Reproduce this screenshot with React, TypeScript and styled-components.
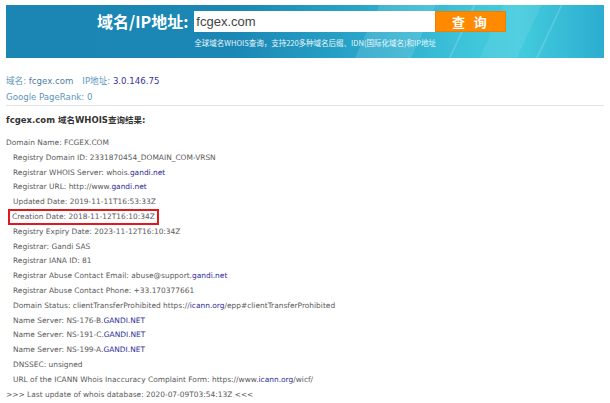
import { createGlobalStyle, styled } from "styled-components";

const GlobalStyle = createGlobalStyle`
  html, body {
    margin: 0;
    padding: 0;
    background: #ffffff;
  }
  body {
    font-family: "DejaVu Sans", Verdana, sans-serif;
  }
`;

const records: { text: string; link?: string; after?: string; indent?: boolean; mark?: boolean }[] = [
  { text: "Domain Name: FCGEX.COM" },
  { text: "Registry Domain ID: 2331870454_DOMAIN_COM-VRSN", indent: true },
  { text: "Registrar WHOIS Server: whois.", link: "gandi.net", indent: true },
  { text: "Registrar URL: http://www.", link: "gandi.net", indent: true },
  { text: "Updated Date: 2019-11-11T16:53:33Z", indent: true },
  { text: "Creation Date: 2018-11-12T16:10:34Z", indent: true, mark: true },
  { text: "Registry Expiry Date: 2023-11-12T16:10:34Z", indent: true },
  { text: "Registrar: Gandi SAS", indent: true },
  { text: "Registrar IANA ID: 81", indent: true },
  { text: "Registrar Abuse Contact Email: abuse@support.", link: "gandi.net", indent: true },
  { text: "Registrar Abuse Contact Phone: +33.170377661", indent: true },
  {
    text: "Domain Status: clientTransferProhibited https://",
    link: "icann.org",
    after: "/epp#clientTransferProhibited",
    indent: true,
  },
  { text: "Name Server: NS-176-B.", link: "GANDI.NET", indent: true },
  { text: "Name Server: NS-191-C.", link: "GANDI.NET", indent: true },
  { text: "Name Server: NS-199-A.", link: "GANDI.NET", indent: true },
  { text: "DNSSEC: unsigned", indent: true },
  {
    text: "URL of the ICANN Whois Inaccuracy Complaint Form: https://www.",
    link: "icann.org",
    after: "/wicf/",
    indent: true,
  },
  { text: ">>> Last update of whois database: 2020-07-09T03:54:13Z <<<" },
];

const App = () => {
  return (
    <Page>
      <GlobalStyle />
      <Banner>
        <SearchRow>
          <SearchLabel>域名/IP地址:</SearchLabel>
          <SearchBox>
            <InputRow>
              <DomainInput>fcgex.com</DomainInput>
              <SearchButton>查 询</SearchButton>
            </InputRow>
            <Hint>全球域名WHOIS查询，支持220多种域名后缀、IDN(国际化域名)和IP地址</Hint>
          </SearchBox>
        </SearchRow>
      </Banner>

      <Summary>
        <p>
          <Muted>域名: </Muted>
          <DomainName>fcgex.com</DomainName>
          <Muted className="gap">IP地址: </Muted>
          <Ip>3.0.146.75</Ip>
        </p>
        <p>
          <Muted>Google PageRank: 0</Muted>
        </p>
      </Summary>

      <ResultTitle>fcgex.com 域名WHOIS查询结果:</ResultTitle>

      <WhoisList>
        {records.map((r, i) => (
          <WhoisLine key={i} $indent={r.indent}>
            <WhoisText $mark={r.mark}>
              {r.text}
              {r.link && <WhoisLink>{r.link}</WhoisLink>}
              {r.after}
            </WhoisText>
          </WhoisLine>
        ))}
      </WhoisList>
    </Page>
  );
};

const Page = styled.div`
  width: 610px;
  padding: 5px 6px 0;
  box-sizing: border-box;
`;

const Banner = styled.header`
  height: 53px;
  background:
    linear-gradient(
      115deg,
      transparent 0%,
      transparent 60%,
      rgba(255, 255, 255, 0.12) 60%,
      rgba(255, 255, 255, 0.12) 69%,
      transparent 69%,
      transparent 75%,
      rgba(255, 255, 255, 0.2) 75.2%,
      transparent 75.5%,
      transparent 80%,
      rgba(255, 255, 255, 0.08) 80%,
      rgba(255, 255, 255, 0.08) 86%,
      transparent 86%,
      transparent 89%,
      rgba(255, 255, 255, 0.2) 89.2%,
      transparent 89.5%,
      transparent 100%
    ),
    linear-gradient(
      to right,
      #1b86b3 0%,
      #1b87b4 38%,
      #2aa6c9 60%,
      #3fc6db 78%,
      #43cbdd 86%,
      #2cadd0 100%
    );
  display: flex;
  padding: 6px 0 0 91px;
  box-sizing: border-box;
`;

const SearchRow = styled.div`
  display: flex;
  align-items: flex-start;
`;

const SearchLabel = styled.div`
  font-family: "Noto Sans CJK SC", sans-serif;
  font-weight: 700;
  font-size: 16px;
  line-height: 21px;
  color: #ffffff;
  margin-right: 6px;
`;

const SearchBox = styled.div`
  display: flex;
  flex-direction: column;
`;

const InputRow = styled.div`
  display: flex;
  height: 21px;
`;

const DomainInput = styled.div`
  width: 241px;
  background: #ffffff;
  font-family: "Liberation Sans", Arial, sans-serif;
  font-size: 13px;
  line-height: 21px;
  color: #444444;
  padding-left: 2px;
  box-sizing: border-box;
`;

const SearchButton = styled.div`
  width: 71px;
  background: #ff8a00;
  border: 1px solid #f07c00;
  box-sizing: border-box;
  color: #ffffff;
  font-family: "Noto Sans CJK SC", sans-serif;
  font-weight: 700;
  font-size: 13px;
  line-height: 19px;
  text-align: center;
  letter-spacing: 3px;
`;

const Hint = styled.div`
  margin-top: 6px;
  font-family: "Noto Sans CJK SC", sans-serif;
  font-size: 7.5px;
  line-height: 10px;
  color: #e8f6fb;
  white-space: nowrap;
`;

const Summary = styled.section`
  padding: 15px 0 0;
  border-bottom: 1px solid #e3e3e3;
  font-family: "DejaVu Sans", Verdana, "Noto Sans CJK SC", sans-serif;
  font-size: 8.6px;

  & > p {
    margin: 0;
    line-height: 16px;
  }
  & .gap {
    margin-left: 9px;
  }
`;

const Muted = styled.span`
  color: #5b95bc;
`;

const DomainName = styled.span`
  color: #4d7ea6;
`;

const Ip = styled.span`
  color: #34349a;
`;

const ResultTitle = styled.h2`
  margin: 0;
  padding-top: 8px;
  font-family: "DejaVu Sans", Verdana, "Noto Sans CJK SC", sans-serif;
  font-size: 8.5px;
  font-weight: 700;
  line-height: 12px;
  color: #333333;
`;

const WhoisList = styled.div`
  padding-top: 10px;
  font-family: "DejaVu Sans", Verdana, sans-serif;
  font-size: 7.45px;
  color: #5a5a5a;
`;

const WhoisLine = styled.div<{ $indent?: boolean }>`
  height: 14.8px;
  line-height: 14.8px;
  padding-left: ${p => (p.$indent ? "7px" : "0")};
  white-space: nowrap;
`;

const WhoisText = styled.span<{ $mark?: boolean }>`
  display: inline-block;
  ${p =>
    p.$mark &&
    `
    outline: 2px solid #e0191f;
    line-height: 12px;
    padding: 0 2px;
    margin-left: -3px;
  `}
`;

const WhoisLink = styled.span`
  color: #2b2b99;
`;

export default App;
